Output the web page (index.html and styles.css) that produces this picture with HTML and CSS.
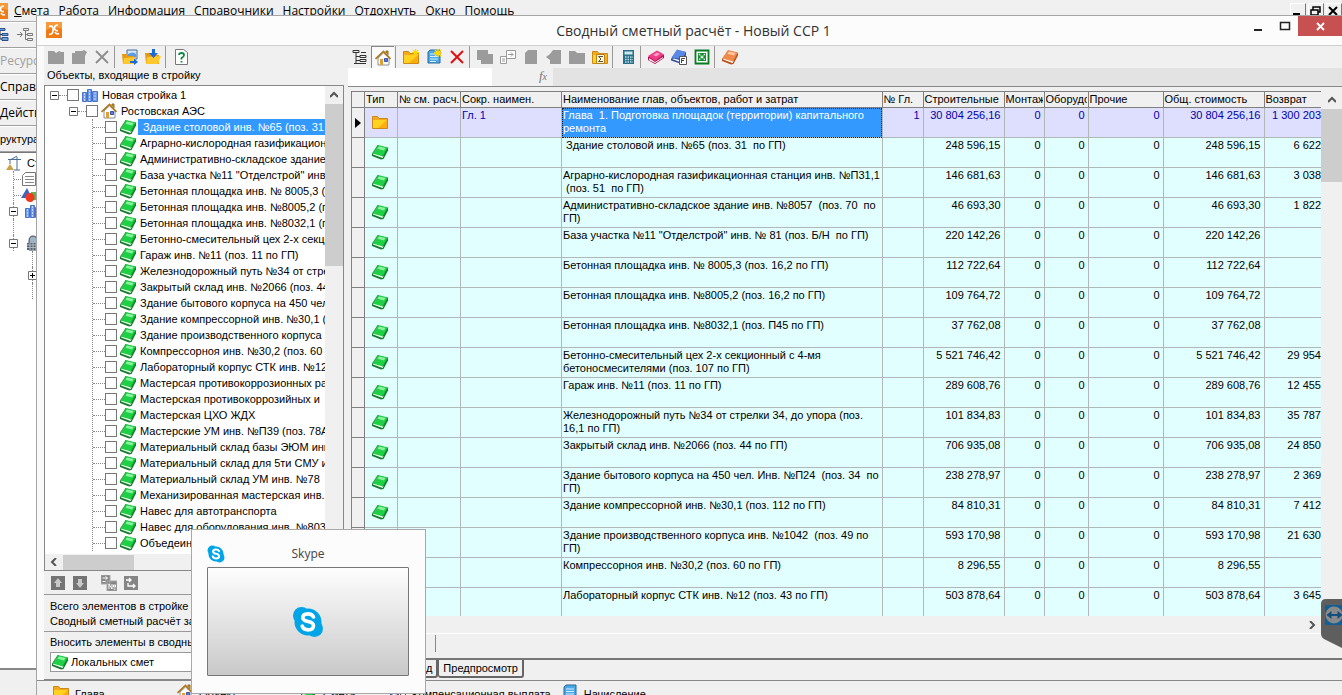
FILE: index.html
```
<!DOCTYPE html>
<html lang="ru">
<head>
<meta charset="utf-8">
<title>Сводный сметный расчёт</title>
<link rel="stylesheet" href="styles.css">
</head>
<body>
<svg class="sprite" aria-hidden="true">
  <symbol id="book" viewBox="0 0 16 16"><path d="M0 10 6 1.500 16 4v2.500L11.500 15 9 15.500 0 12z" fill="#157a2c"/><path d="M1 10.500 10.500 14l1.200-2L3 9.500H1z" fill="#f3fff3"/><path d="M6 1 16 3.500 11 12.500.5 9.500z" fill="#1fd045"/><path d="M7 2.500 13.500 4l-1.500 2.500-6.500-1.700z" fill="#8bf0a0"/><path d="M6 1 .5 9.500" stroke="#4a9a5a"/><path d="m11 12.500 5-9" stroke="#0f9a2c"/></symbol>
  <symbol id="bookpink" viewBox="0 0 16 16"><path d="M0 8 9 2l7 4v3l-9 6-7-4z" fill="#b01050"/><path d="m1 9 6 4 8-5v1l-8 5-6-3z" fill="#fff"/><path d="M0 7 9 1.500 16 5.500 7 12z" fill="#ee3b86"/><path d="m5 6 4-2.500 3 1.500-4 2.500z" fill="#ff9cc4"/></symbol>
  <symbol id="bookorange" viewBox="0 0 16 16"><path d="M0 10 6 1.500 16 4v2.500L11.500 15 9 15.500 0 12z" fill="#b5541c"/><path d="M1 10.500 10.500 14l1.200-2L3 9.500H1z" fill="#fff"/><path d="M6 1 16 3.500 11 12.500.5 9.500z" fill="#f08a4b"/><path d="M7 2.500 13.500 4l-1.500 2.500-6.500-1.700z" fill="#ffc9a3"/></symbol>
  <symbol id="bookblue" viewBox="0 0 16 16"><path d="M0 10 6 1l9 2v3l-4 8-2 .5-9-3z" fill="#2a4fa0"/><path d="M1 10 9 13l1-1.500-7-2z" fill="#fff"/><path d="M6 .5 15 3l-4 7L.5 8.500z" fill="#5b8ae6"/><path d="M8.500 7.500h7v8h-7z" fill="#fff" stroke="#555"/><path d="M10.500 14V9.500H14M10.500 11.500H13" stroke="#444" fill="none"/></symbol>
  <symbol id="house" viewBox="0 0 16 16"><path d="M3 8v7h11V8L8.500 3z" fill="#fff" stroke="#8d8d9c"/><path d="M11 3V1h2v4" fill="#c9a03c" stroke="#8a6a20"/><path d="m.5 9 8-7.500 7 7.500" fill="none" stroke="#b07818" stroke-width="1.600"/><path d="M5 9h3v6H5z" fill="#e0a030"/><path d="M9.500 8.500h3v3h-3z" fill="#5a7ee0" stroke="#3a55a8"/></symbol>
  <symbol id="city" viewBox="0 0 16 16"><path d="M.5 5.500h4v9h-4zM5.500 2.500h4v12h-4zM10.500 4.500h5v10h-5z" fill="#6f9cec" stroke="#4a72c8"/><path d="M2.500 6v8M7.500 3v11M13 5v9" stroke="#c5d9ff" stroke-dasharray="2 1"/></symbol>
  <symbol id="folder" viewBox="0 0 16 16"><path d="M.5 2.500h5l1.500 2h8.500v10H.5z" fill="#f5a81c" stroke="#c98a1a"/><path d="M1 6h14v8H1z" fill="#ffd21f"/><path d="M15 6v8H6z" fill="#ffab12"/></symbol>
  <symbol id="star" viewBox="0 0 8 8"><path d="M4 0v8M0 4h8M1 1l6 6M7 1 1 7" stroke="#ffd800" stroke-width="1.400"/></symbol>
  <symbol id="newfolder" viewBox="0 0 16 16"><use href="#folder"/><use href="#star" x="9" y="0" width="7" height="7"/></symbol>
  <symbol id="sumfolder" viewBox="0 0 16 16"><use href="#folder"/><path d="M4.500 5.500h8v9h-8z" fill="#fff7d8" stroke="#b8801a"/><path d="M11 7.500H6.500L9 10l-2.500 2.500H11" fill="none" stroke="#554"/></symbol>
  <symbol id="doc" viewBox="0 0 16 16"><path d="M4 1h10v13H2V3z" fill="#4aa8e8" stroke="#2a6898"/><path d="M4 5h8M4 7.500h8M4 10h8M4 12.500h6" stroke="#d8f0ff"/></symbol>
  <symbol id="newdoc" viewBox="0 0 16 16"><use href="#doc"/><use href="#star" x="8" y="0" width="8" height="8"/></symbol>
  <symbol id="redx" viewBox="0 0 16 16"><path d="m2 2 12 12M14 2 2 14" stroke="#e01010" stroke-width="2"/></symbol>
  <symbol id="grayx" viewBox="0 0 16 16"><path d="m2 2 12 12M14 2 2 14" stroke="#8c8c8c" stroke-width="1.800"/></symbol>
  <symbol id="gfolder" viewBox="0 0 16 16"><path d="M0 2h6l2 2 3-2 2 1h3v12H0z" fill="#9b9b9b"/></symbol>
  <symbol id="gplain" viewBox="0 0 16 16"><path d="M0 2h6l2 2h8v11H0z" fill="#9b9b9b"/></symbol>
  <symbol id="gbook" viewBox="0 0 16 16"><path d="M1 4h3V2h7l2-1 3 2-2 4v8H1z" fill="#9b9b9b"/></symbol>
  <symbol id="gcopy" viewBox="0 0 16 16"><path d="M0 1h11v4h5v10H4v-4H0z" fill="#9b9b9b"/></symbol>
  <symbol id="gdoc" viewBox="0 0 16 16"><path d="M5 1h9v14H2V4z" fill="#9b9b9b"/></symbol>
  <symbol id="gback" viewBox="0 0 16 16"><path d="M7 1h8v14H4v-4L0 8l4-3z" fill="#9b9b9b"/></symbol>
  <symbol id="gmove" viewBox="0 0 16 16"><path d="M6.500 1.500h9v8h-9zM.5 7.500h6v7h-6z" fill="#fff" stroke="#9a9a9a"/><path d="M8 5.500h5M11 3.500l2 2-2 2M2 10h3M2 12h3" fill="none" stroke="#9a9a9a"/></symbol>
  <symbol id="open" viewBox="0 0 16 16"><path d="M5 1h10v9H5z" fill="#d5e8fa" stroke="#4a6a98"/><path d="M6 5q5-3 8 0v4H6z" fill="#5b9be0"/><path d="M0 5h5l1 2h6v8H1z" fill="#e59a12"/><path d="m2 9 12-1-2 7H1z" fill="#ffc92e"/><path d="M8 12h4V9.500l4 3.500-4 3v-2H8z" fill="#1b68d8"/></symbol>
  <symbol id="download" viewBox="0 0 16 16"><path d="M0 4h5l1 2h8v9H1z" fill="#e59a12"/><path d="m2 8 14-1-3 8H1z" fill="#ffc92e"/><path d="M7 0h3v4h3L8.500 9 4 4h3z" fill="#1b68d8"/></symbol>
  <symbol id="help" viewBox="0 0 16 16"><path d="M2.500.5h8l4 3v12h-12z" fill="#fff" stroke="#777"/><path d="M6 6q0-2 2.500-2T11 6.200Q11 7.500 8.500 9v1.500M8.500 12v1.500" fill="none" stroke="#0a8a3a" stroke-width="1.800"/></symbol>
  <symbol id="tree" viewBox="0 0 16 16"><path d="M1 1.500h6v2H1zM8 6.500h6v2H8zM8 10.500h6v2H8zM4 4v10M4 7.500h4M4 11.500h4M4 14.500h10M9 3.500h5M2 14.500h3" fill="none" stroke="#333"/></symbol>
  <symbol id="treeblue" viewBox="0 0 16 16"><path d="M6 1.500h6v2H6zM9 6.500h6v2H9zM9 10.500h6v3H9z" fill="#6fa0e0" stroke="#2a4f90"/><path d="M7 4v8h2M7 7.500h2" fill="none" stroke="#333"/><path d="M1 8h4" stroke="#e0c020" stroke-width="2"/></symbol>
  <symbol id="treein" viewBox="0 0 16 16"><path d="M6.500 1.500h5v2h-5zM10.500 6.500h5v2h-5zM10.500 11.500h5v2h-5zM8.500 4v8.500h2M8.500 7.500h2M0 7.500h5M3 5l2.500 2.500L3 10" fill="none" stroke="#777"/></symbol>
  <symbol id="calc" viewBox="0 0 16 16"><path d="M3 1h11v14H3z" fill="#2a6f88"/><path d="M4.500 2.500h8v3h-8z" fill="#c8e8ee"/><path d="M5 8h8M5 10.500h8M5 13h8" stroke="#b8dde8" stroke-width="1.500" stroke-dasharray="1.500 1"/></symbol>
  <symbol id="excel" viewBox="0 0 16 16"><path d="M1.500 1.500h13v13h-13z" fill="#fff" stroke="#087a20" stroke-width="1.800"/><path d="M4 4h8v8H4z" fill="#149030"/><path d="m5 5 6 6m0-6-6 6" stroke="#fff" stroke-width="1.200" stroke-dasharray="1.500 .7"/></symbol>
  <symbol id="up" viewBox="0 0 16 16"><path d="M1 1h14v14H1z" fill="#747474"/><path d="m8 3 4 5h-2v4H6V8H4z" fill="#c8c8c8"/></symbol>
  <symbol id="down" viewBox="0 0 16 16"><path d="M1 1h14v14H1z" fill="#747474"/><path d="m8 13 4-5h-2V4H6v4H4z" fill="#c8c8c8"/></symbol>
  <symbol id="renum" viewBox="0 0 16 16"><path d="M0 0h9v9H0zM6 6h10v10H6z" fill="#858585" stroke="#aaa"/><path d="M1.500 3h5M4.500 1.500 6.500 3 4.500 4.800M1.500 6.500h3M8 14V9l3 5V9M12.500 10h2v2h-2zM12.500 14h2" fill="none" stroke="#fff"/></symbol>
  <symbol id="shift" viewBox="0 0 16 16"><path d="M1 1h14v14H1z" fill="#858585"/><path d="M3 5h5M6 3l2 2-2 2M5 8v3h7M10 9l2 2-2 2" fill="none" stroke="#fff" stroke-width="1.300"/></symbol>
  <symbol id="app" viewBox="0 0 16 16"><path d="M0 0h16v16H0z" fill="#ef7a16"/><path d="M0 0h16v7Q8 4 0 8z" fill="#f79a3c"/><path d="M3 4.500q3.500-1.500 4 2T6 10M12 3q-3.500 0-3.500 3T12 8.500M13 11.500q-3 1-4-1.500M3 12.500q3 0 4-2.500" fill="none" stroke="#fff" stroke-width="1.700"/></symbol>
  <symbol id="skype" viewBox="0 0 32 32"><circle cx="16" cy="16" r="13.500" fill="#00a5e8"/><circle cx="9.500" cy="9.500" r="8.500" fill="#00a5e8"/><circle cx="22.500" cy="22.500" r="8.500" fill="#00a5e8"/><path d="M21.500 11Q20 7.800 15.800 7.900 10.800 8 10.800 11.700 11 14.600 16 15.500 21.600 16.500 21.500 19.800 21.300 23.900 16.200 23.900 11.500 23.900 10.200 20.200" fill="none" stroke="#fff" stroke-width="3.600" stroke-linecap="round"/></symbol>
  <symbol id="crane" viewBox="0 0 16 16"><path d="M11 2v13M2 4.500h13M11 1 5 4.500M8 15h6M4 5v4" fill="none" stroke="#4a6a98"/><path d="M0 15 4 9l4 6z" fill="#c9a24a"/></symbol>
  <symbol id="page" viewBox="0 0 16 16"><path d="M4.500 1.500h10v13h-13v-10z" fill="#fff" stroke="#777"/><path d="M4 5.500h9M4 8.500h9M4 11.500h9" stroke="#888"/></symbol>
  <symbol id="shapes" viewBox="0 0 16 16"><path d="m0 11 6-10 5 10z" fill="#3c64c0"/><path d="M10 5h6v8h-6z" fill="#6ab04a"/><circle cx="9" cy="10.500" r="4.500" fill="#f03a20"/></symbol>
  <symbol id="tank" viewBox="0 0 16 16"><path d="M4 6q0-5 4-5t4 5v9H4z" fill="#9ab4c8" stroke="#445"/><path d="M2 8h12v7H2z" fill="#56646f"/><path d="M2 10h12M2 12.500h12M5 8v7M8 8v7M11 8v7" stroke="#aab8c4"/></symbol>
  <symbol id="minus" viewBox="0 0 9 9"><path d="M.5.5h8v8h-8z" fill="#fff" stroke="#777"/><path d="M2 4.500h5" stroke="#000"/></symbol>
  <symbol id="plus" viewBox="0 0 9 9"><path d="M.5.5h8v8h-8z" fill="#fff" stroke="#777"/><path d="M2 4.500h5M4.500 2v5" stroke="#000"/></symbol>
  <symbol id="cl" viewBox="0 0 8 8"><path d="M6 0 2 4l4 4" fill="none" stroke="#555" stroke-width="2"/></symbol>
  <symbol id="cr" viewBox="0 0 8 8"><path d="m2 0 4 4-4 4" fill="none" stroke="#555" stroke-width="2"/></symbol>
  <symbol id="cu" viewBox="0 0 8 8"><path d="m0 6 4-4 4 4" fill="none" stroke="#555" stroke-width="2"/></symbol>
</svg>

<div class="host">
  <nav class="menu">
    <svg class="ico"><use href="#app"/></svg>
    <a href="#"><u>С</u>мета</a><a href="#">Работа</a><a href="#">Информация</a><a href="#">Справочники</a><a href="#">Настройки</a><a href="#">Отдохнуть</a><a href="#">Окно</a><a href="#">Помощь</a>
    <span class="mdi">
      <button aria-label="Свернуть окно"><svg viewBox="0 0 12 12"><path d="M2 9h7" stroke="#000" stroke-width="2"/></svg></button>
      <button aria-label="Восстановить окно"><svg viewBox="0 0 12 12"><path d="M4 5V2h7v5H9M2 5h7v5H2z" fill="none" stroke="#000" stroke-width="1.500"/></svg></button>
      <button aria-label="Закрыть документ"><svg viewBox="0 0 12 12"><path d="m2 2 8 8m0-8-8 8" stroke="#000" stroke-width="2"/></svg></button>
    </span>
  </nav>
  <aside class="strip">
    <div class="bar tools"><svg class="ico"><use href="#treeblue"/></svg><svg class="ico"><use href="#treein"/></svg></div>
    <div class="bar off">Ресурсы</div>
    <div class="bar">Справочник</div>
    <div class="bar">Действия</div>
    <div class="bar small">руктура</div>
    <ul class="mini">
      <li><svg class="ico"><use href="#crane"/></svg>Стройка
      <li class="in"><i></i><svg class="ico"><use href="#page"/></svg>
      <li class="in"><i></i><svg class="ico"><use href="#shapes"/></svg>
      <li class="in ex"><button class="exp" aria-label="Свернуть"><svg><use href="#minus"/></svg></button><svg class="ico"><use href="#city"/></svg>
      <li class="gap">
      <li class="in ex"><button class="exp" aria-label="Свернуть"><svg><use href="#minus"/></svg></button><svg class="ico"><use href="#tank"/></svg>
      <li class="deep">
      <li class="deep"><button class="exp" aria-label="Развернуть"><svg><use href="#plus"/></svg></button>
      <li class="deep">
    </ul>
    <div class="foot"></div>
  </aside>
</div>

<main class="dialog">
  <header class="title">
    <svg class="ico"><use href="#app"/></svg>
    <h1>Сводный сметный расчёт - Новый ССР 1</h1>
    <div class="winbtns">
      <button aria-label="Свернуть"><svg viewBox="0 0 12 12"><path d="M2 10h8" stroke="#222" stroke-width="2"/></svg></button>
      <button aria-label="Развернуть"><svg viewBox="0 0 12 12"><path d="M1.500 2.500h9v7h-9z" fill="none" stroke="#222" stroke-width="1.500"/></svg></button>
      <button class="close" aria-label="Закрыть"><svg viewBox="0 0 12 12"><path d="m3 3 7 7m0-7-7 7" stroke="#fff" stroke-width="1.800"/></svg></button>
    </div>
  </header>

  <div class="work">
    <section class="left">
      <div class="toolbar">
        <button aria-label="Новая глава"><svg class="ico"><use href="#gfolder"/></svg></button>
        <button aria-label="Новый объект"><svg class="ico"><use href="#gbook"/></svg></button>
        <button aria-label="Удалить"><svg class="ico"><use href="#grayx"/></svg></button>
        <hr>
        <button aria-label="Открыть"><svg class="ico"><use href="#open"/></svg></button>
        <button aria-label="Загрузить"><svg class="ico"><use href="#download"/></svg></button>
        <hr>
        <button aria-label="Справка"><svg class="ico"><use href="#help"/></svg></button>
      </div>
      <h2>Объекты, входящие в стройку</h2>
      <div class="treebox">
        <div class="treeview">
          <ul class="tree">
            <li class="l1"><button class="exp" aria-label="Свернуть"><svg><use href="#minus"/></svg></button><i></i><label><input type="checkbox"><svg class="ico"><use href="#city"/></svg><span>Новая стройка 1</span></label>
            <li class="l2"><button class="exp" aria-label="Свернуть"><svg><use href="#minus"/></svg></button><i></i><label><input type="checkbox"><svg class="ico"><use href="#house"/></svg><span>Ростовская АЭС</span></label>
          </ul>
          <ul class="tree leaves">
            <li class="sel"><i></i><label><input type="checkbox"><svg class="ico"><use href="#book"/></svg><span>&nbsp;Здание столовой инв. №65 (поз. 31 по ГП)</span></label>
            <li><i></i><label><input type="checkbox"><svg class="ico"><use href="#book"/></svg><span>Аграрно-кислородная газификационная станция</span></label>
            <li><i></i><label><input type="checkbox"><svg class="ico"><use href="#book"/></svg><span>Административно-складское здание инв. №8057</span></label>
            <li><i></i><label><input type="checkbox"><svg class="ico"><use href="#book"/></svg><span>База участка №11 "Отделстрой" инв. № 81</span></label>
            <li><i></i><label><input type="checkbox"><svg class="ico"><use href="#book"/></svg><span>Бетонная площадка инв. № 8005,3 (поз. 16,2 по ГП)</span></label>
            <li><i></i><label><input type="checkbox"><svg class="ico"><use href="#book"/></svg><span>Бетонная площадка инв. №8005,2 (поз. 16,2 по ГП)</span></label>
            <li><i></i><label><input type="checkbox"><svg class="ico"><use href="#book"/></svg><span>Бетонная площадка инв. №8032,1 (поз. П45 по ГП)</span></label>
            <li><i></i><label><input type="checkbox"><svg class="ico"><use href="#book"/></svg><span>Бетонно-смесительный цех 2-х секционный</span></label>
            <li><i></i><label><input type="checkbox"><svg class="ico"><use href="#book"/></svg><span>Гараж инв. №11 (поз. 11 по ГП)</span></label>
            <li><i></i><label><input type="checkbox"><svg class="ico"><use href="#book"/></svg><span>Железнодорожный путь №34 от стрелки 34</span></label>
            <li><i></i><label><input type="checkbox"><svg class="ico"><use href="#book"/></svg><span>Закрытый склад инв. №2066 (поз. 44 по ГП)</span></label>
            <li><i></i><label><input type="checkbox"><svg class="ico"><use href="#book"/></svg><span>Здание бытового корпуса на 450 чел.</span></label>
            <li><i></i><label><input type="checkbox"><svg class="ico"><use href="#book"/></svg><span>Здание компрессорной инв. №30,1 (поз. 112 по ГП)</span></label>
            <li><i></i><label><input type="checkbox"><svg class="ico"><use href="#book"/></svg><span>Здание производственного корпуса инв. №1042</span></label>
            <li><i></i><label><input type="checkbox"><svg class="ico"><use href="#book"/></svg><span>Компрессорноя инв. №30,2 (поз. 60 по ГП)</span></label>
            <li><i></i><label><input type="checkbox"><svg class="ico"><use href="#book"/></svg><span>Лабораторный корпус СТК инв. №12</span></label>
            <li><i></i><label><input type="checkbox"><svg class="ico"><use href="#book"/></svg><span>Мастерсая противокоррозионных работ</span></label>
            <li><i></i><label><input type="checkbox"><svg class="ico"><use href="#book"/></svg><span>Мастерская противокоррозийных и</span></label>
            <li><i></i><label><input type="checkbox"><svg class="ico"><use href="#book"/></svg><span>Мастерская ЦХО ЖДХ</span></label>
            <li><i></i><label><input type="checkbox"><svg class="ico"><use href="#book"/></svg><span>Мастерские УМ инв. №П39 (поз. 78А)</span></label>
            <li><i></i><label><input type="checkbox"><svg class="ico"><use href="#book"/></svg><span>Материальный склад базы ЭЮМ инв.</span></label>
            <li><i></i><label><input type="checkbox"><svg class="ico"><use href="#book"/></svg><span>Материальный склад для 5ти СМУ инв.</span></label>
            <li><i></i><label><input type="checkbox"><svg class="ico"><use href="#book"/></svg><span>Материальный склад УМ инв. №78</span></label>
            <li><i></i><label><input type="checkbox"><svg class="ico"><use href="#book"/></svg><span>Механизированная мастерская инв.</span></label>
            <li><i></i><label><input type="checkbox"><svg class="ico"><use href="#book"/></svg><span>Навес для автотранспорта</span></label>
            <li><i></i><label><input type="checkbox"><svg class="ico"><use href="#book"/></svg><span>Навес для оборудования инв. №8030</span></label>
            <li><i></i><label><input type="checkbox"><svg class="ico"><use href="#book"/></svg><span>Объедеин</span></label>
          </ul>
        </div>
        <div class="vbar tall"><svg class="chev"><use href="#cu"/></svg><div class="thumb"></div></div>
        <div class="hbar"><svg class="chev"><use href="#cl"/></svg><div class="thumb"></div></div>
      </div>
      <div class="moves">
        <button aria-label="Выше"><svg class="ico"><use href="#up"/></svg></button>
        <button aria-label="Ниже"><svg class="ico"><use href="#down"/></svg></button>
        <button class="apart" aria-label="Перенумеровать"><svg class="ico"><use href="#renum"/></svg></button>
        <button aria-label="Переместить"><svg class="ico"><use href="#shift"/></svg></button>
      </div>
      <div class="info"><p>Всего элементов в стройке</p><p>Сводный сметный расчёт за</p></div>
      <div class="choice">
        <label for="kind">Вносить элементы в сводный</label>
        <div class="pick"><svg class="ico"><use href="#book"/></svg><select id="kind"><option>Локальных смет</option></select></div>
      </div>
    </section>

    <section class="right">
      <div class="toolbar">
        <button aria-label="Дерево"><svg class="ico"><use href="#tree"/></svg></button>
        <button class="on" aria-label="Стройка"><svg class="ico"><use href="#house"/></svg></button>
        <hr>
        <button aria-label="Добавить главу"><svg class="ico"><use href="#newfolder"/></svg></button>
        <button aria-label="Добавить строку"><svg class="ico"><use href="#newdoc"/></svg></button>
        <button aria-label="Удалить строку"><svg class="ico"><use href="#redx"/></svg></button>
        <hr>
        <button aria-label="Копировать"><svg class="ico"><use href="#gcopy"/></svg></button>
        <button aria-label="Переместить в"><svg class="ico"><use href="#gmove"/></svg></button>
        <button aria-label="Документ"><svg class="ico"><use href="#gdoc"/></svg></button>
        <button aria-label="Вернуть"><svg class="ico"><use href="#gback"/></svg></button>
        <button aria-label="Папка"><svg class="ico"><use href="#gplain"/></svg></button>
        <button aria-label="Итоги"><svg class="ico"><use href="#sumfolder"/></svg></button>
        <hr>
        <button aria-label="Расчёт"><svg class="ico"><use href="#calc"/></svg></button>
        <hr>
        <button aria-label="Справочник"><svg class="ico"><use href="#bookpink"/></svg></button>
        <button aria-label="Формулы"><svg class="ico"><use href="#bookblue"/></svg></button>
        <button aria-label="Экспорт в Excel"><svg class="ico"><use href="#excel"/></svg></button>
        <hr>
        <button aria-label="Отчёт"><svg class="ico"><use href="#bookorange"/></svg></button>
      </div>
      <div class="formula"><input type="text" aria-label="Ячейка"><span>f<small>x</small></span><output></output></div>
      <div class="gridbox">
        <div class="gridview">
          <table>
            <colgroup><col class="c0"><col class="c1"><col class="c2"><col class="c3"><col><col class="c5"><col class="c6"><col class="c7"><col class="c8"><col class="c9"><col class="c10"><col class="c11"></colgroup>
            <thead><tr><th><th>Тип<th>№ см. расч.<th>Сокр. наимен.<th>Наименование глав, объектов, работ и затрат<th>№ Гл.<th>Строительные<th><div>Монтаж</div><th><div>Оборудо</div><th>Прочие<th>Общ. стоимость<th>Возврат</tr></thead>
            <tbody>
            <tr class="cur"><td><svg class="mark" viewBox="0 0 6 10"><path d="m0 0 6 5-6 5z"/></svg><td><svg class="ico"><use href="#folder"/></svg><td><td>Гл. 1<td>Глава&nbsp; 1. Подготовка площадок (территории) капитального<br>ремонта<td>1<td>30 804 256,16<td>0<td>0<td>0<td>30 804 256,16<td>1 300 203
            <tr><td><td><svg class="ico"><use href="#book"/></svg><td><td><td>&nbsp;Здание столовой инв. №65 (поз. 31&nbsp; по ГП)<td><td>248 596,15<td>0<td>0<td>0<td>248 596,15<td>6 622
            <tr><td><td><svg class="ico"><use href="#book"/></svg><td><td><td>Аграрно-кислородная газификационная станция инв. №П31,1<br>&nbsp;(поз. 51&nbsp; по ГП)<td><td>146 681,63<td>0<td>0<td>0<td>146 681,63<td>3 038
            <tr><td><td><svg class="ico"><use href="#book"/></svg><td><td><td>Административно-складское здание инв. №8057&nbsp; (поз. 70&nbsp; по<br>ГП)<td><td>46 693,30<td>0<td>0<td>0<td>46 693,30<td>1 822
            <tr><td><td><svg class="ico"><use href="#book"/></svg><td><td><td>База участка №11 "Отделстрой" инв. № 81 (поз. Б/Н&nbsp; по ГП)<td><td>220 142,26<td>0<td>0<td>0<td>220 142,26<td>
            <tr><td><td><svg class="ico"><use href="#book"/></svg><td><td><td>Бетонная площадка инв. № 8005,3 (поз. 16,2 по ГП)<td><td>112 722,64<td>0<td>0<td>0<td>112 722,64<td>
            <tr><td><td><svg class="ico"><use href="#book"/></svg><td><td><td>Бетонная площадка инв. №8005,2 (поз. 16,2 по ГП)<td><td>109 764,72<td>0<td>0<td>0<td>109 764,72<td>
            <tr><td><td><svg class="ico"><use href="#book"/></svg><td><td><td>Бетонная площадка инв. №8032,1 (поз. П45 по ГП)<td><td>37 762,08<td>0<td>0<td>0<td>37 762,08<td>
            <tr><td><td><svg class="ico"><use href="#book"/></svg><td><td><td>Бетонно-смесительный цех 2-х секционный с 4-мя<br>бетоносмесителями (поз. 107 по ГП)<td><td>5 521 746,42<td>0<td>0<td>0<td>5 521 746,42<td>29 954
            <tr><td><td><svg class="ico"><use href="#book"/></svg><td><td><td>Гараж инв. №11 (поз. 11 по ГП)<td><td>289 608,76<td>0<td>0<td>0<td>289 608,76<td>12 455
            <tr><td><td><svg class="ico"><use href="#book"/></svg><td><td><td>Железнодорожный путь №34 от стрелки 34, до упора (поз.<br>16,1 по ГП)<td><td>101 834,83<td>0<td>0<td>0<td>101 834,83<td>35 787
            <tr><td><td><svg class="ico"><use href="#book"/></svg><td><td><td>Закрытый склад инв. №2066 (поз. 44 по ГП)<td><td>706 935,08<td>0<td>0<td>0<td>706 935,08<td>24 850
            <tr><td><td><svg class="ico"><use href="#book"/></svg><td><td><td>Здание бытового корпуса на 450 чел. Инв. №П24&nbsp; (поз. 34&nbsp; по<br>ГП)<td><td>238 278,97<td>0<td>0<td>0<td>238 278,97<td>2 369
            <tr><td><td><svg class="ico"><use href="#book"/></svg><td><td><td>Здание компрессорной инв. №30,1 (поз. 112 по ГП)<td><td>84 810,31<td>0<td>0<td>0<td>84 810,31<td>7 412
            <tr><td><td><svg class="ico"><use href="#book"/></svg><td><td><td>Здание производственного корпуса инв. №1042&nbsp; (поз. 49 по<br>ГП)<td><td>593 170,98<td>0<td>0<td>0<td>593 170,98<td>21 630
            <tr><td><td><svg class="ico"><use href="#book"/></svg><td><td><td>Компрессорноя инв. №30,2 (поз. 60 по ГП)<td><td>8 296,55<td>0<td>0<td>0<td>8 296,55<td>
            <tr><td><td><svg class="ico"><use href="#book"/></svg><td><td><td>Лабораторный корпус СТК инв. №12 (поз. 43 по ГП)<td><td>503 878,64<td>0<td>0<td>0<td>503 878,64<td>3 645
            </tbody>
          </table>
        </div>
        <div class="vbar"><svg class="chev"><use href="#cu"/></svg><div class="thumb"></div></div>
        <div class="hbar end"><svg class="chev"><use href="#cr"/></svg></div>
        <div class="under"><i></i></div>
      </div>
      <div class="tabs"><button>Ввод</button><button>Предпросмотр</button></div>
    </section>
  </div>

  <footer class="legend">
    <span><svg class="ico"><use href="#folder"/></svg>Глава</span>
    <span><svg class="ico"><use href="#house"/></svg>Объект</span>
    <span><svg class="ico"><use href="#book"/></svg>Смета</span>
    <span><svg class="ico"><use href="#bookblue"/></svg>Компенсационная выплата</span>
    <span><svg class="ico"><use href="#doc"/></svg>Начисление</span>
  </footer>
</main>

<aside class="preview">
  <div class="caption"><svg><use href="#skype"/></svg><span>Skype</span></div>
  <button aria-label="Окно Skype"><svg><use href="#skype"/></svg></button>
</aside>

<svg class="viewer" viewBox="0 0 21 50"><path d="M5 0h16v49L3 40q-3-2-3-5V5q0-5 5-5z" fill="#5e5e5e"/><path d="M4 6h17v20H4z" fill="#145e94"/><circle cx="13" cy="16" r="8.500" fill="#8a8a8a"/><path d="m5.500 16 5-4v3h6v-3l5 4-5 4v-3h-6v3z" fill="#134e7c"/></svg>
</body>
</html>
```
FILE: styles.css
```
* { box-sizing: border-box; }
body { margin: 0; height: 100vh; overflow: hidden; position: relative; background: #f0f0f0; color: #000; font: 11px/13px "Liberation Sans", Arial, sans-serif; }
h1, h2, p, ul { margin: 0; padding: 0; font-weight: normal; }
ul { list-style: none; }
button { margin: 0; padding: 0; border: 0; background: none; color: inherit; font: inherit; }
a { color: inherit; text-decoration: none; }
.sprite { position: absolute; width: 0; height: 0; }
.ico { width: 16px; height: 16px; flex: none; display: block; }
.chev { width: 8px; height: 8px; flex: none; }

/* main application window */
.host { height: 100%; display: flex; flex-direction: column; }
.menu { display: flex; align-items: center; gap: 9px; height: 22px; flex: none; font: 12px/20px "Open Sans", sans-serif; border-bottom: 1px solid #b0b0b0; }
.menu > .ico { margin: 0 -3px 0 -8px; }
.mdi { margin-left: auto; display: flex; gap: 2px; }
.mdi button { width: 16px; height: 16px; border: 1px solid #fff; border-right-color: #777; }
.mdi svg { display: block; width: 12px; height: 12px; }
.strip { flex: 1; width: 37px; min-height: 0; display: flex; flex-direction: column; overflow: hidden; white-space: nowrap; }
.bar { height: 26px; flex: none; display: flex; align-items: center; border-bottom: 1px solid #a0a0a0; border-top: 1px solid #fff; font: 12px/20px "Open Sans", sans-serif; }
.bar.tools { gap: 8px; }
.bar.tools .ico:first-child { margin-left: -7px; }
.bar.off { color: #a0a0a0; }
.bar.small { font: 11px/13px "Liberation Sans", sans-serif; }
.mini { flex: 1; background: #fff; padding-top: 2px; border-top: 1px solid #777; }
.mini li { display: flex; align-items: center; height: 16px; margin-left: 13px; border-left: 1px dotted #888; }
.mini li:first-child { margin-left: 6px; border: 0; gap: 5px; }
.mini i { width: 11px; border-top: 1px dotted #888; }
.mini .ex { gap: 7px; }
.mini .exp { margin-left: -5px; }
.mini .deep { margin-left: 32px; }
.exp { width: 9px; height: 9px; flex: none; }
.exp svg { display: block; width: 9px; height: 9px; }
.foot { height: 27px; flex: none; border-top: 2px solid #888; }

/* dialog window */
.dialog { position: absolute; top: 15px; left: 36px; right: 0; bottom: 0; display: flex; flex-direction: column; background: #f0f0f0; border: 1px solid #a5a5a5; border-width: 1px 0 0 1px; }
.title { height: 30px; flex: none; display: flex; background: #fcfcfc; border-bottom: 1px solid #d0d0d0; }
.title .ico { margin: 6px 0 0 9px; }
.title h1 { flex: 1; text-align: center; color: #333; font: 14px/29px "Open Sans", sans-serif; padding-left: 81px; }
.winbtns { display: flex; align-items: flex-start; }
.winbtns button { width: 27px; height: 20px; display: flex; justify-content: center; align-items: center; }
.winbtns svg { width: 12px; height: 12px; }
.winbtns .close { width: 44px; background: #c75050; }
.work { flex: 1; min-height: 0; display: flex; padding-left: 7px; background: linear-gradient(90deg, #fafafa 7px, #f0f0f0 7px); }
.left { width: 304px; flex: none; padding-right: 4px; display: flex; flex-direction: column; white-space: nowrap; }
.toolbar { height: 22px; flex: none; display: flex; align-items: center; }
.toolbar button { width: 23px; height: 22px; display: flex; align-items: center; justify-content: center; }
.toolbar hr { width: 1px; height: 22px; border: 0; margin: 0 3px 0 1px; background: #999; }
.toolbar .on { background: #fafafa; border: 1px solid #888; border-width: 1px 0 0 1px; }
.left h2 { font-size: 11px; line-height: 15px; padding-left: 3px; height: 17px; flex: none; }
.treebox { flex: 1; min-height: 0; display: grid; grid-template: minmax(0, 1fr) 16px / minmax(0, 1fr) 18px; border: 1px solid #888; background: #fff; }
.treeview { overflow: hidden; padding-top: 1px; }
.tree li { display: flex; align-items: center; height: 16px; }
.tree i { flex: none; border-top: 1px dotted #888; }
.tree label { display: flex; align-items: center; flex: 1; min-width: 0; }
.tree label span { overflow: hidden; flex: 1; line-height: 16px; padding-left: 4px; }
.tree label .ico { margin-left: 3px; }
.tree input { appearance: none; width: 12px; height: 12px; flex: none; margin: 0; border: 1px solid #777; background: #fff; }
.l1 { padding-left: 5px; }
.l2 { padding-left: 24px; }
.l1 i, .l2 i { width: 8px; }
.leaves { margin-left: 47px; border-left: 1px dotted #888; }
.leaves i { width: 12px; }
.sel span { background: #3399ff; color: #fff; }
.tree .sel label span { padding-left: 2px; margin-left: 2px; }
.vbar { display: flex; flex-direction: column; align-items: center; padding-top: 5px; gap: 5px; background: #f0f0f0; }
.vbar .thumb { width: 100%; height: 73px; background: #cdcdcd; }
.tall .thumb { height: 162px; }
.hbar { grid-column: 1 / -1; display: flex; align-items: center; gap: 5px; padding-left: 5px; background: #f0f0f0; }
.hbar .thumb { width: 71px; height: 15px; background: #cdcdcd; }
.hbar.end { justify-content: flex-end; padding-right: 26px; border-bottom: 1px solid #fff; }
.moves { height: 24px; flex: none; display: flex; align-items: center; gap: 6px; padding-left: 6px; border-bottom: 1px solid #999; }
.moves .apart { margin-left: 7px; }
.info { height: 37px; flex: none; padding: 4px 6px 0; line-height: 15px; border-bottom: 1px solid #999; }
.choice { height: 48px; flex: none; padding: 4px 6px; display: flex; flex-direction: column; gap: 3px; border-bottom: 1px solid #888; }
.pick { display: flex; align-items: center; height: 20px; padding-left: 1px; background: #fff; border: 1px solid #999; }
.pick select { appearance: none; border: 0; background: none; flex: 1; padding: 0 3px; font: inherit; color: inherit; }

/* estimate grid */
.right { flex: 1; min-width: 0; display: flex; flex-direction: column; }
.formula { display: grid; grid-template-columns: 144px 61px 1fr; height: 19px; flex: none; border-bottom: 1px solid #888; }
.formula input { min-width: 0; border: 0; padding: 0 2px; background: #fff; font: inherit; }
.formula span { text-align: right; padding-right: 6px; color: #777; font: italic 13px/16px "Liberation Serif", serif; }
.formula small { font-size: 10px; }
.formula output { background: #e3e3e3; }
.gridbox { flex: 1; min-height: 0; display: grid; grid-template: minmax(0, 1fr) 18px 24px / minmax(0, 1fr) 21px; padding: 4px 0 0 3px; border-bottom: 2px solid #777; }
.gridview { overflow: hidden; }
table { width: 100%; table-layout: fixed; border-collapse: collapse; border-top: 1px solid #777; }
.c0 { width: 13px; } .c1 { width: 33px; } .c2 { width: 63px; } .c3 { width: 101px; } .c5 { width: 41px; } .c6 { width: 81px; }
.c7 { width: 40px; } .c8 { width: 44px; } .c9 { width: 75px; } .c10 { width: 101px; } .c11 { width: 57px; }
th, td { overflow: hidden; white-space: nowrap; padding: 1px; text-align: left; font-weight: normal; vertical-align: top; }
th { height: 16px; background: #f0f0f0; border: 1px solid #808080; }
th div { overflow: hidden; }
td { height: 30px; background: #e1ffff; border: 1px solid #b0b8b8; }
td:nth-child(1) { background: #f0f0f0; border-color: #808080; vertical-align: middle; }
td:nth-child(2) { padding: 6px 7px 0; }
td:nth-child(n+6) { text-align: right; padding-right: 3px; }
td:nth-child(12), th:nth-child(12) { padding-right: 0; border-right: 0; }
.cur td { background: #dedeff; color: #0000b0; }
.cur td:nth-child(1) { background: #f0f0f0; }
.cur td:nth-child(5) { background: #3399ff; color: #fff; outline: 1px dotted #222; outline-offset: -1px; }
.mark { display: block; width: 6px; height: 10px; margin-left: 2px; }
.under { grid-column: 1 / -1; padding: 1px 0 6px; }
.under i { display: block; width: 85px; height: 17px; border-right: 1px solid #888; }
.tabs { height: 20px; flex: none; display: flex; align-items: flex-start; padding-left: 54px; }
.tabs button { height: 18px; padding: 0 4px; border: 1px solid #666; border-top: 0; border-right-width: 2px; border-bottom-width: 2px; border-radius: 0 0 3px 3px; }
.legend { height: 15px; flex: none; display: flex; gap: 11px; padding: 3px 0 0 16px; border-top: 1px solid #888; overflow: hidden; white-space: nowrap; }
.legend span { display: flex; gap: 6px; line-height: 20px; height: 20px; }
.legend span:nth-child(1), .legend span:nth-child(2) { width: 113px; }
.legend span:nth-child(3) { width: 78px; }

/* taskbar preview */
.preview { position: absolute; left: 191px; bottom: 1px; width: 235px; padding: 15px 16px 17px 15px; background: #fcfcfc; border: 1px solid #a8a8a8; }
.caption { display: grid; grid-template-columns: 20px 1fr 20px; height: 22px; text-align: center; color: #444; font: 12px/18px "Open Sans", sans-serif; }
.caption svg { width: 18px; height: 18px; }
.preview button { display: flex; align-items: center; justify-content: center; width: 100%; height: 109px; border: 1px solid #777; border-radius: 1px; background: linear-gradient(#fefefe, #c9c9c9); }
.preview button svg { width: 32px; height: 32px; }
.viewer { position: absolute; right: 0; bottom: 46px; width: 21px; height: 50px; }
```
